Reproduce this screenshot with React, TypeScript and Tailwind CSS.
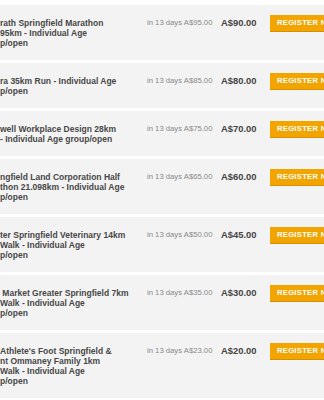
import React from 'react';

type Race = {
  lines: string[];
  was: string;
  price: string;
};

const races: Race[] = [
  { lines: ['rath Springfield Marathon', '95km - Individual Age', 'p/open'], was: 'A$95.00', price: 'A$90.00' },
  { lines: ['ra 35km Run - Individual Age', 'p/open'], was: 'A$85.00', price: 'A$80.00' },
  { lines: ['well Workplace Design 28km', '- Individual Age group/open'], was: 'A$75.00', price: 'A$70.00' },
  { lines: ['ngfield Land Corporation Half', 'thon 21.098km - Individual Age', 'p/open'], was: 'A$65.00', price: 'A$60.00' },
  { lines: ['ter Springfield Veterinary 14km', 'Walk - Individual Age', 'p/open'], was: 'A$50.00', price: 'A$45.00' },
  { lines: [' Market Greater Springfield 7km', 'Walk - Individual Age', 'p/open'], was: 'A$35.00', price: 'A$30.00' },
  { lines: ["Athlete's Foot Springfield &", 'nt Ommaney Family 1km', 'Walk - Individual Age', 'p/open'], was: 'A$23.00', price: 'A$20.00' },
];

function RaceRow({ race }: { race: Race }) {
  return (
    <div className="flex items-start bg-[#f3f3f3] pt-[10px] pb-[12px]">
      <div className="w-[147px] shrink-0 pt-[3px] text-[8.5px] font-bold leading-[10px] text-[#484848] whitespace-pre">
        {race.lines.map((l, i) => (
          <div key={i}>{l}</div>
        ))}
      </div>
      <div className="w-[74px] shrink-0 pt-[3px] text-[7.7px] leading-[10px] text-[#888] whitespace-nowrap">
        in 13 days {race.was}
      </div>
      <div className="w-[49px] shrink-0 pt-[3px] text-[9.4px] font-bold leading-[10px] text-[#444]">
        {race.price}
      </div>
      <button className="flex h-[17px] shrink-0 items-center border-b border-[#d68f00] bg-[#f2a500] px-[7px] text-[7.6px] font-bold tracking-[0.3px] text-white whitespace-nowrap">
        REGISTER NOW
      </button>
    </div>
  );
}

export default function App() {
  return (
    <div
      className="w-full overflow-hidden bg-white pt-[5px]"
      style={{ fontFamily: '"Liberation Sans", Arial, sans-serif' }}
    >
      <div className="flex flex-col gap-[3px]">
        {races.map((r, i) => (
          <RaceRow key={i} race={r} />
        ))}
      </div>
    </div>
  );
}
